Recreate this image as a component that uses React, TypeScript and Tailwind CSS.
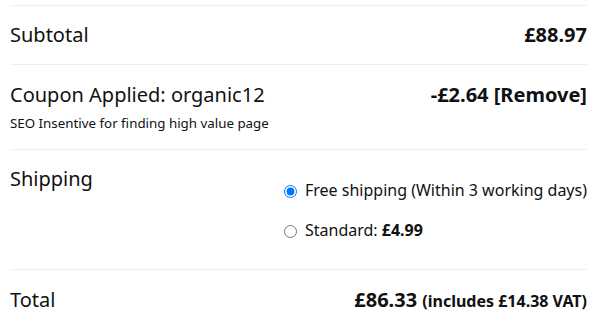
import React from "react";

export default function App() {
  return (
    <div className="w-[609px] h-[326px] bg-white overflow-hidden text-[#111] font-['Noto_Sans',sans-serif]">
      <div className="ml-[10px] w-[577px] pt-[5px]">
        <div className="flex justify-between border-t border-[#eeeeee] pt-[14px] pb-[14px] text-[20px] leading-[30px]">
          <div>Subtotal</div>
          <div className="font-bold">£88.97</div>
        </div>
        <div className="flex justify-between border-t border-[#eeeeee] pt-[15px] pb-[16px]">
          <div>
            <div className="text-[20px] leading-[30px]">Coupon Applied: organic12</div>
            <div className="mt-[3px] text-[13.33px] leading-[20px]">SEO Insentive for finding high value page</div>
          </div>
          <div className="text-[20px] leading-[30px] font-bold">-£2.64 [Remove]</div>
        </div>
        <div className="flex justify-between border-t border-[#eeeeee]">
          <div className="pt-[14px] text-[20px] leading-[30px]">Shipping</div>
          <ul className="pt-[28px] pb-[27px] flex flex-col gap-[16px] text-[16px] leading-[24px]">
            <li className="flex items-center">
              <input type="radio" name="ship" defaultChecked className="m-0 mr-[8px] w-[13px] h-[13px] translate-y-[1px]" />
              <span>Free shipping (Within 3 working days)</span>
            </li>
            <li className="flex items-center">
              <input type="radio" name="ship" className="m-0 mr-[8px] w-[13px] h-[13px] translate-y-[1px]" />
              <span>
                Standard: <span className="font-bold">£4.99</span>
              </span>
            </li>
          </ul>
        </div>
        <div className="flex justify-between border-t border-[#eeeeee] pt-[15px] pb-[15px] text-[20px] leading-[30px]">
          <div>Total</div>
          <div className="font-bold">
            £86.33 <span className="text-[16px]">(includes £14.38 VAT)</span>
          </div>
        </div>
      </div>
    </div>
  );
}
